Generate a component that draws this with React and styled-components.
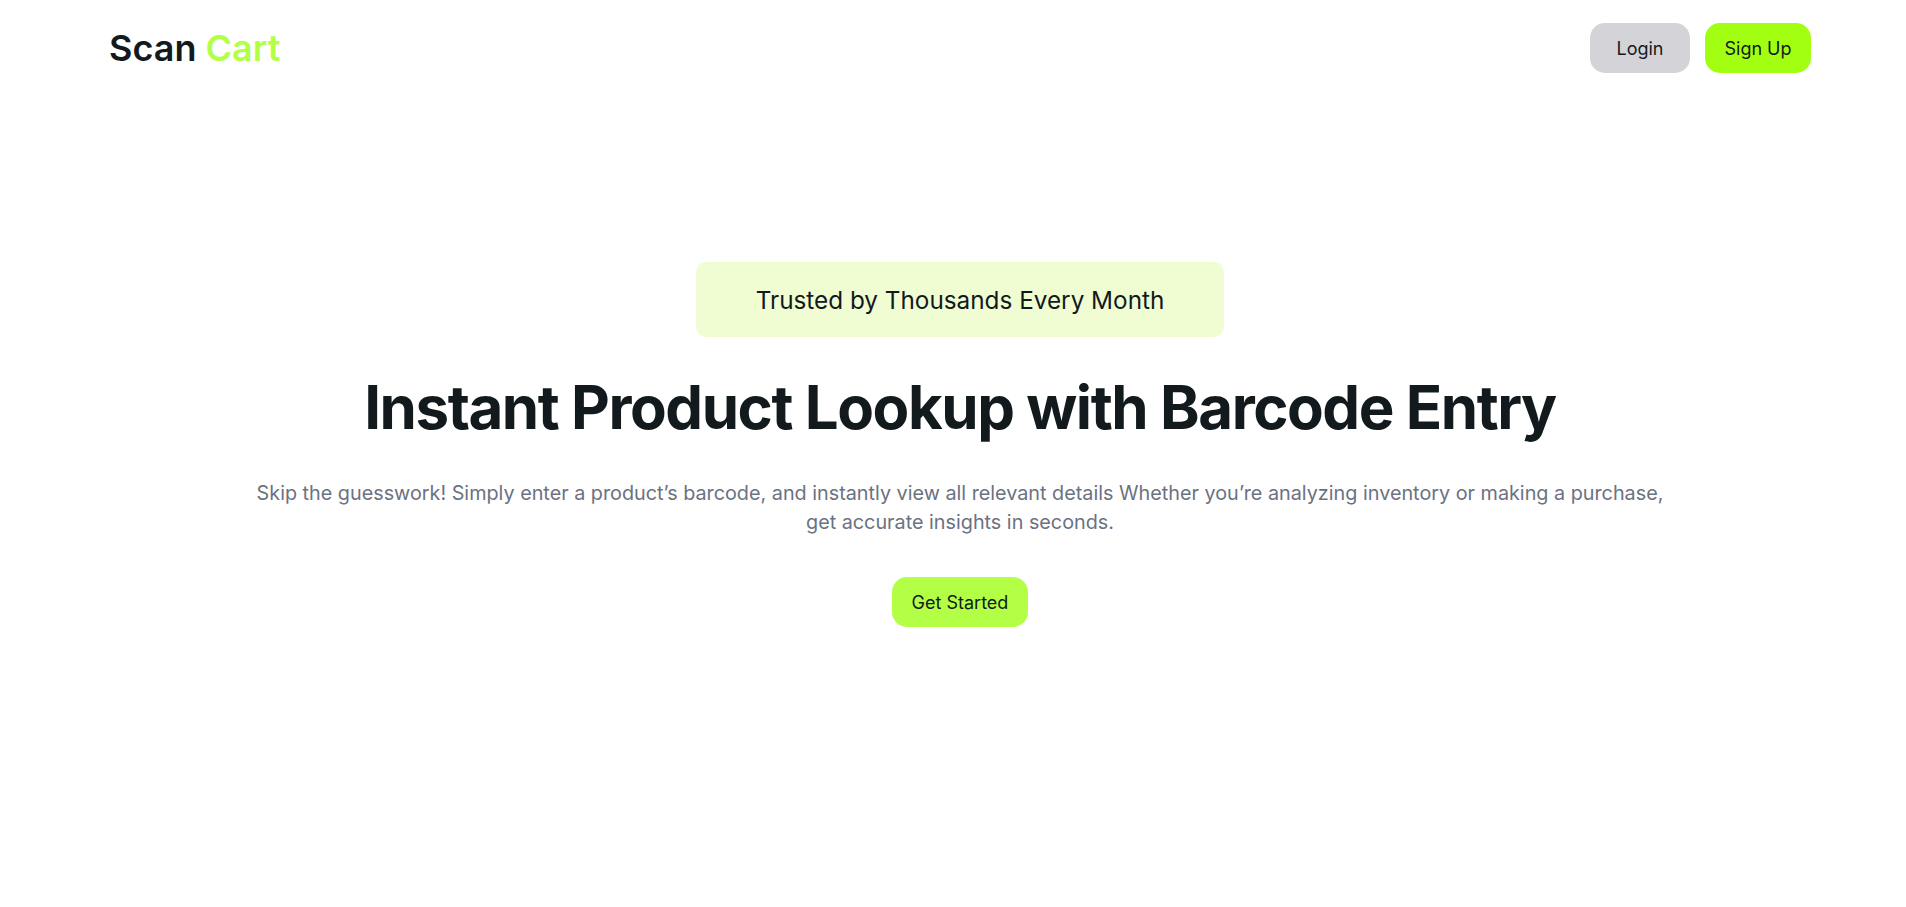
import styled, { createGlobalStyle } from "styled-components";

const GlobalStyle = createGlobalStyle`
  * {
    box-sizing: border-box;
  }
  body {
    margin: 0;
    background: #ffffff;
    font-family: Inter, "Noto Sans", sans-serif;
    color: #121a1d;
  }
`;

export default function App() {
  return (
    <>
      <GlobalStyle />
      <Page>
        <Nav>
          <Logo>
            Scan <span>Cart</span>
          </Logo>
          <NavActions>
            <NavButton $width="100px">Login</NavButton>
            <NavButton $width="106px" $primary>
              Sign Up
            </NavButton>
          </NavActions>
        </Nav>

        <Hero>
          <Badge>Trusted by Thousands Every Month</Badge>
          <Title>Instant Product Lookup with Barcode Entry</Title>
          <Lead>
            Skip the guesswork! Simply enter a product’s barcode, and instantly
            view all relevant details Whether you’re analyzing inventory or
            making a purchase, get accurate insights in seconds.
          </Lead>
          <StartButton>Get Started</StartButton>
        </Hero>
      </Page>
    </>
  );
}

const Page = styled.div`
  min-height: 907px;
  padding: 0 95px 0 109px;
`;

const Nav = styled.nav`
  height: 96px;
  display: flex;
  align-items: center;
  justify-content: space-between;
`;

const Logo = styled.div`
  font-size: 36px;
  font-weight: 600;
  color: #121a1d;
  span {
    color: #b2ff45;
  }
`;

const NavActions = styled.div`
  display: flex;
  align-items: center;
  gap: 15px;
`;

const NavButton = styled.button`
  width: ${(p) => p.$width};
  height: 50px;
  padding: 0;
  border: none;
  border-radius: 15px;
  font-family: inherit;
  font-size: 18px;
  color: #121a1d;
  cursor: pointer;
  background: ${(p) => (p.$primary ? "#a3ff12" : "#d4d4d8")};
`;

const Hero = styled.section`
  display: flex;
  flex-direction: column;
  align-items: center;
  text-align: center;
  padding-top: 166px;
`;

const Badge = styled.div`
  height: 75px;
  padding: 0 60px;
  display: flex;
  align-items: center;
  justify-content: center;
  background: #f0fdd2;
  border-radius: 10px;
  font-size: 24.3px;
  color: #121a1d;
`;

const Title = styled.h1`
  margin: 40px 0 0;
  font-size: 60px;
  line-height: 60px;
  font-weight: 700;
  letter-spacing: -1.45px;
  color: #121a1d;
`;

const Lead = styled.p`
  margin: 42px 0 0;
  max-width: 1440px;
  font-size: 19.8px;
  line-height: 29px;
  color: #6b7280;
`;

const StartButton = styled.button`
  margin-top: 40px;
  height: 50px;
  padding: 0 20px;
  border: none;
  border-radius: 15px;
  background: #b2ff45;
  font-family: inherit;
  font-size: 18px;
  color: #121a1d;
  cursor: pointer;
`;
